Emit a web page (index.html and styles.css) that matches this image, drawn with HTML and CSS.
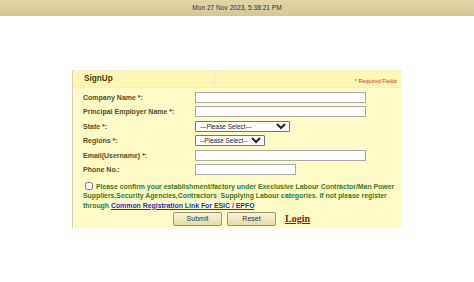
FILE: index.html
```html
<!DOCTYPE html>
<html lang="en">
<head>
    <meta charset="UTF-8">
    <title>SignUp</title>
    <link rel="stylesheet" href="styles.css">
</head>
<body>
    <!-- Top date bar -->
    <div class="topbar">Mon 27 Nov 2023, 5:38:21 PM</div>

    <!-- Sign up panel -->
    <div class="panel">
        <div class="panel-head">
            <div class="panel-title">SignUp</div>
            <div class="panel-req">* Required Fields</div>
        </div>

        <form class="signup-form">
            <div class="row">
                <label>Company Name *:</label>
                <input type="text" class="inp-long">
            </div>
            <div class="row">
                <label>Principal Employer Name *:</label>
                <input type="text" class="inp-long">
            </div>
            <div class="row">
                <label>State *:</label>
                <select class="sel-state"><option>---Please Select---</option></select>
            </div>
            <div class="row">
                <label>Regions *:</label>
                <select class="sel-region"><option>--Please Select--</option></select>
            </div>
            <div class="row">
                <label>Email(Username) *:</label>
                <input type="text" class="inp-long">
            </div>
            <div class="row">
                <label>Phone No.:</label>
                <input type="text" class="inp-short">
            </div>

            <div class="confirm">
                <input type="checkbox" class="chk">
                Please confirm your establishment/factory under Execlusive Labour Contractor/Man Power Suppliers,Security Agencies,Contractors&nbsp; Supplying Labour categories. If not please register through <a href="#">Common Registration Link For ESIC / EPFO</a>
            </div>

            <div class="actions">
                <button type="button" class="btn">Submit</button>
                <button type="button" class="btn">Reset</button>
                <a href="#" class="login">Login</a>
            </div>
        </form>
    </div>
</body>
</html>
```

FILE: styles.css
```css
/* Basic page styling */
body {
    font-family: "Liberation Sans", Arial, sans-serif;
    background-color: #ffffff;
    margin: 0;
    padding: 0;
}

/* Top date bar */
.topbar {
    height: 15px;
    line-height: 15px;
    background: linear-gradient(to bottom, #e2d5a6, #d8c893);
    border-bottom: 1px solid #b9c6d6;
    text-align: center;
    font-size: 6.6px;
    color: #333;
}

/* Sign up panel */
.panel {
    width: 328px;
    margin: 54px 0 0 72px;
    background-color: #fefbc6;
    border-left: 1px solid #d6d2b4;
    border-top: 1px solid #efeccc;
    padding-bottom: 2px;
}

.panel-head {
    display: flex;
    justify-content: space-between;
    align-items: center;
    height: 16px;
    background: linear-gradient(to bottom, #fdf8b8, #fbf6b0);
    border-bottom: 1px solid #f4efc0;
}

.panel-title {
    width: 130px;
    padding-left: 11px;
    font-size: 8.2px;
    font-weight: bold;
    color: #4a3a14;
    border-right: 1px solid #f0eab0;
    height: 16px;
    line-height: 16px;
}

.panel-req {
    font-size: 5.5px;
    color: #e0301e;
    padding-right: 4px;
    padding-top: 4px;
}

.signup-form {
    padding: 2px 0 0 10px;
}

.row {
    display: flex;
    align-items: center;
    height: 14.5px;
}

.row label {
    width: 112px;
    font-size: 7px;
    font-weight: bold;
    color: #5a4a1e;
}

.row input {
    height: 11px;
    box-sizing: border-box;
    border: 1px solid #a9a9a9;
    background: #fff;
    padding: 0;
}

.inp-long { width: 171px; }
.inp-short { width: 101px; }

.row select {
    height: 11px;
    box-sizing: border-box;
    font-family: "Liberation Sans", Arial, sans-serif;
    font-size: 6.4px;
    padding: 0;
    border: 1px solid #767676;
    border-radius: 1px;
    background: #fff;
    color: #222;
}

.sel-state { width: 95px; }
.sel-region { width: 70px; }

/* Confirmation text */
.confirm {
    margin-top: 5px;
    padding-right: 0;
    font-size: 6.9px;
    font-weight: bold;
    color: #2f7d1e;
    line-height: 9.3px;
}

.chk {
    width: 8px;
    height: 8px;
    margin: 0 1px 0 2px;
    vertical-align: -1px;
}

.confirm a {
    color: #1a2fd0;
    text-decoration: underline;
}

/* Buttons */
.actions {
    display: flex;
    align-items: center;
    padding-left: 90px;
    gap: 5px;
    margin-top: 2px;
}

.btn {
    width: 49px;
    height: 14px;
    padding: 0;
    font-family: "Liberation Sans", Arial, sans-serif;
    font-size: 7px;
    color: #333;
    background: linear-gradient(to bottom, #f8f4d8, #e6dca8);
    border: 1px solid #9c9478;
    border-radius: 2px;
}

.login {
    margin-left: 4px;
    font-family: "Liberation Serif", "Times New Roman", serif;
    font-size: 10px;
    font-weight: bold;
    color: #8a1a10;
    text-decoration: underline;
}
```
